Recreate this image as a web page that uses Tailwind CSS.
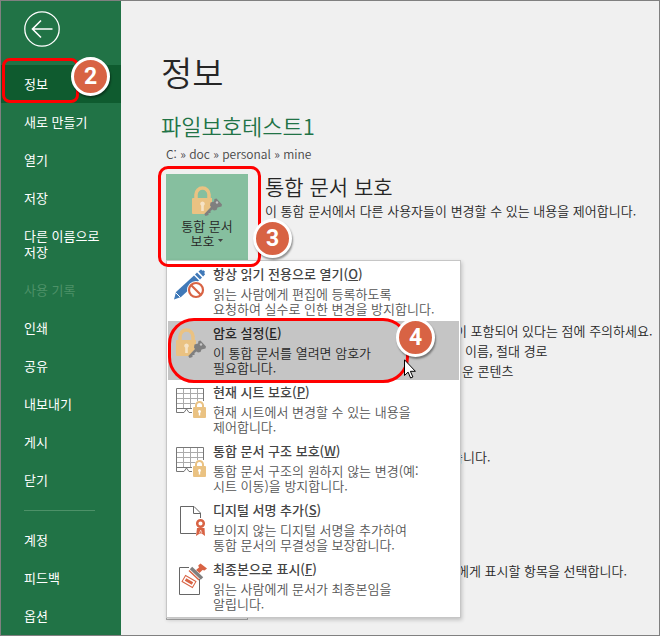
<!DOCTYPE html>
<html lang="ko">
<head>
<meta charset="utf-8">
<title>정보</title>
<script src="https://cdn.jsdelivr.net/npm/@tailwindcss/browser@4"></script>
</head>
<body class="font-['Noto_Sans_CJK_KR',sans-serif] text-[13px] text-[#262626]">
<svg class="hidden" aria-hidden="true">
  <symbol id="lock-key" viewBox="0 0 34 33">
    <path d="M6 14V9.500a6.500 6.500 0 0 1 13 0V14" fill="none" stroke="#eac282" stroke-width="3.500"/>
    <path d="M3 13h19v8l-7 8H3a1 1 0 0 1-1-1V14a1 1 0 0 1 1-1z" fill="#eac282"/>
    <path d="M12.500 16.500a2.300 2.300 0 0 1 1.300 4.200V26h-2.600v-5.300a2.300 2.300 0 0 1 1.300-4.200z" fill="#fff" fill-opacity=".55"/>
    <path d="M26.500 13.500 32 19.500l-.5 2-4 1-1 2.500-2.500.5-1.500-1-2 1.500v2h-2v2l-3 1-1.200-2L21 22l-1-1.500.5-3 3.500-1 .5-2.500z" fill="#7f7f7f"/>
    <circle cx="27" cy="17.500" r="1.200" fill="#c6c6c6"/>
  </symbol>
  <symbol id="pen-deny" viewBox="0 0 34 33">
    <path d="M0 31.500 2 24 20 7.500l5 5L7 29z" fill="#4079b8"/>
    <path d="m21 6.500 2-2 5 5-2 2zM24.500 3.500 27 1.500l1.500 1.300 1-.6 1.500 1.500-.8 1.300.9 1.300-2 2.200z" fill="#4079b8"/>
    <path d="m2 25 4 4" stroke="#fff" stroke-width="1"/>
    <circle cx="22" cy="22" r="9" fill="#fff"/>
    <circle cx="22" cy="22" r="7" fill="#fff" stroke="#d86344" stroke-width="2.200"/>
    <path d="m17 17 10 10" stroke="#d86344" stroke-width="2.200"/>
  </symbol>
  <symbol id="sheet-lock" viewBox="0 0 34 33">
    <path d="M9.500 3v19M16.500 3v19M23.500 3v19M3 7.500h26M3 17.500h26M3 12.500h26" stroke="#ababab" fill="none"/>
    <path d="M29.500 15V2.500h-27v24H7m-4.500-4H20m-13 4h3l2.500-3.500L15 26.500h3" stroke="#777" fill="none"/>
    <path d="M18 20h3a5 5 0 0 1 10-1l3 1v13H18z" fill="#fff"/>
    <path d="M22 22v-2.500a3.500 3.500 0 0 1 7 0V22" fill="none" stroke="#eac282" stroke-width="2"/>
    <rect x="19" y="21" width="13" height="11" rx="1" fill="#eac282"/>
    <path d="M25.500 24a1.500 1.500 0 0 1 .7 2.800V29.500h-1.400v-2.700a1.500 1.500 0 0 1 .7-2.800z" fill="#fff"/>
  </symbol>
  <symbol id="doc-ribbon" viewBox="0 0 34 33">
    <path d="M22 29.500H6.500v-27H20l6.500 6.500v5M19.500 2.500v7h7" stroke="#666" fill="none"/>
    <circle cx="26.500" cy="19.500" r="3.300" fill="#fff" stroke="#d86344" stroke-width="2.500"/>
    <path d="M23 24h7.500l.5 8-3.300-2.500h-1.900L22 32z" fill="#d86344"/>
    <path d="m26.700 26-1.200 3M26.700 26l1.200 3" stroke="#fff" stroke-width=".6"/>
  </symbol>
  <symbol id="doc-stamp" viewBox="0 0 34 33">
    <path d="M15 4.500H5.500v27h20V16" stroke="#666" fill="none"/>
    <path d="m17 5 11 10.500" stroke="#7f7f7f" stroke-width="3.500"/>
    <path d="m15 7.500 10 9.500" stroke="#d86344" stroke-width="1.500"/>
    <path d="m22 7 3-2.500-.8-2L26.500.500l6.500 5-2.500 2-2-.5-3 3z" fill="#d86344"/>
    <g transform="rotate(30 15 18.500)"><rect x="9" y="15" width="12" height="7" fill="#fff" stroke="#d86344"/><rect x="11" y="17" width="8" height="3" fill="#d86344"/></g>
  </symbol>
</svg>
<div class="flex min-h-screen overflow-hidden border border-[#808080] bg-[#f0f0f0]">
  <nav class="w-[120px] shrink-0 bg-[#217346] leading-4 text-white">
    <button aria-label="뒤로" class="mt-[10px] ml-[23px] block">
      <svg class="size-9" viewBox="0 0 36 36" fill="none" stroke="#fff"><circle cx="18" cy="18" r="17.200" stroke-width="1.300"/><path d="M28.500 18H8.500M17 9.500 8.500 18l8.500 8.500" stroke-width="1.600"/></svg>
    </button>
    <div class="relative mt-[18px]">
      <a href="#" class="block bg-[#0f5b2f] py-[11px] pl-[23px]">정보</a>
      <div class="pointer-events-none absolute -top-[7px] left-[1px] h-[45px] w-[77px] rounded-lg border-3 border-[#f00]"></div>
      <div class="absolute -top-2 left-[70px] z-30 flex size-[39px] items-center justify-center rounded-full border-3 border-white bg-[#d86344] font-[Roboto,sans-serif] text-[23px] font-bold shadow-[1px_2px_2px_rgba(0,0,0,0.4)]">2</div>
    </div>
    <a href="#" class="block py-[11px] pl-[23px]">새로 만들기</a>
    <a href="#" class="block py-[11px] pl-[23px]">열기</a>
    <a href="#" class="block py-[11px] pl-[23px]">저장</a>
    <a href="#" class="block py-[11px] pl-[23px]">다른 이름으로<br>저장</a>
    <a aria-disabled="true" class="block py-[11px] pl-[23px] text-[#4d9168]">사용 기록</a>
    <a href="#" class="block py-[11px] pl-[23px]">인쇄</a>
    <a href="#" class="block py-[11px] pl-[23px]">공유</a>
    <a href="#" class="block py-[11px] pl-[23px]">내보내기</a>
    <a href="#" class="block py-[11px] pl-[23px]">게시</a>
    <a href="#" class="block py-[11px] pl-[23px]">닫기</a>
    <hr class="mt-[11px] mr-[26px] mb-[10px] ml-[23px] border-[#4d9168]">
    <a href="#" class="block py-[11px] pl-[23px]">계정</a>
    <a href="#" class="block py-[11px] pl-[23px]">피드백</a>
    <a href="#" class="block pt-[11px] pb-2 pl-[23px]">옵션</a>
  </nav>
  <main class="min-w-0 flex-1 pt-[51px] pl-10 leading-5 font-[350]">
    <h1 class="text-[34px] leading-10">정보</h1>
    <h2 class="mt-[19px] text-[22px] leading-7 text-[#217346]">파일보호테스트1</h2>
    <p class="mt-[5px] ml-[5px] text-xs leading-5 text-[#444]">C: » doc » personal » mine</p>
    <section class="mt-[10px] ml-[5px] flex h-[120px] gap-[17px]">
      <div class="relative h-[86px] w-[82px] shrink-0">
        <button aria-haspopup="menu" aria-expanded="true" class="flex h-full w-full flex-col items-center bg-[#86bf9f] pt-[11px] leading-[15px]">
          <svg class="h-[33px] w-[34px] shrink-0"><use href="#lock-key"/></svg>
          <span>통합 문서</span>
          <span class="flex items-center gap-1">보호 <svg class="h-[3px] w-[5px]" viewBox="0 0 5 3"><path d="M0 0h5L2.500 3z" fill="#444"/></svg></span>
        </button>
        <div class="pointer-events-none absolute -top-2 -left-2 z-20 h-[101px] w-[103px] rounded-[10px] border-3 border-[#f00]"></div>
        <div class="absolute top-[45px] left-[87px] z-30 flex size-[39px] items-center justify-center rounded-full border-3 border-white bg-[#d86344] font-[Roboto,sans-serif] text-[23px] font-bold text-white shadow-[1px_2px_2px_rgba(0,0,0,0.4)]">3</div>
        <div role="menu" class="absolute top-full left-0 z-10 w-[295px] border border-[#c6c6c6] bg-white p-[1px] text-[#555] shadow-[1px_2px_4px_rgba(0,0,0,0.2)]">
          <button role="menuitem" class="flex w-full gap-[5px] pt-1 pr-2 pb-[5px] pl-[6px] text-left">
            <svg class="mt-[2px] h-[33px] w-[34px] shrink-0"><use href="#pen-deny"/></svg>
            <span><span class="block leading-4 font-medium text-[#444]">항상 읽기 전용으로 열기(<u>O</u>)</span><span class="mt-1 block leading-[15px]">읽는 사람에게 편집에 등록하도록<br>요청하여 실수로 인한 변경을 방지합니다.</span></span>
          </button>
          <div class="relative">
            <button role="menuitem" class="flex w-full gap-[5px] bg-[#c5c5c5] pt-1 pr-2 pb-[5px] pl-[6px] text-left text-[#262626]">
              <svg class="mt-[2px] h-[33px] w-[34px] shrink-0"><use href="#lock-key"/></svg>
              <span><span class="block leading-4 font-medium">암호 설정(<u>E</u>)</span><span class="mt-1 block leading-[15px]">이 통합 문서를 열려면 암호가<br>필요합니다.</span></span>
            </button>
            <div class="pointer-events-none absolute -top-[3px] left-0 h-[65px] w-[241px] rounded-[26px] border-3 border-[#f00]"></div>
            <div class="absolute -top-[3px] left-[228px] flex size-[39px] items-center justify-center rounded-full border-3 border-white bg-[#d86344] font-[Roboto,sans-serif] text-[23px] font-bold text-white shadow-[1px_2px_2px_rgba(0,0,0,0.4)]">4</div>
            <svg class="absolute top-[38px] left-[236px] h-5 w-3" viewBox="0 0 12 20"><path d="M.5.800v15.700l3.600-3.400 2.500 5.900 2.300-1-2.500-5.700h5z" fill="#fff" stroke="#000"/></svg>
          </div>
          <button role="menuitem" class="flex w-full gap-[5px] pt-1 pr-2 pb-[5px] pl-[6px] text-left">
            <svg class="mt-[2px] h-[33px] w-[34px] shrink-0"><use href="#sheet-lock"/></svg>
            <span><span class="block leading-4 font-medium text-[#444]">현재 시트 보호(<u>P</u>)</span><span class="mt-1 block leading-[15px]">현재 시트에서 변경할 수 있는 내용을<br>제어합니다.</span></span>
          </button>
          <button role="menuitem" class="flex w-full gap-[5px] pt-1 pr-2 pb-[5px] pl-[6px] text-left">
            <svg class="mt-[2px] h-[33px] w-[34px] shrink-0"><use href="#sheet-lock"/></svg>
            <span><span class="block leading-4 font-medium text-[#444]">통합 문서 구조 보호(<u>W</u>)</span><span class="mt-1 block leading-[15px]">통합 문서 구조의 원하지 않는 변경(예:<br>시트 이동)을 방지합니다.</span></span>
          </button>
          <button role="menuitem" class="flex w-full gap-[5px] pt-1 pr-2 pb-[5px] pl-[6px] text-left">
            <svg class="mt-[2px] h-[33px] w-[34px] shrink-0"><use href="#doc-ribbon"/></svg>
            <span><span class="block leading-4 font-medium text-[#444]">디지털 서명 추가(<u>S</u>)</span><span class="mt-1 block leading-[15px]">보이지 않는 디지털 서명을 추가하여<br>통합 문서의 무결성을 보장합니다.</span></span>
          </button>
          <button role="menuitem" class="flex w-full gap-[5px] pt-1 pr-2 pb-[5px] pl-[6px] text-left">
            <svg class="mt-[2px] h-[33px] w-[34px] shrink-0"><use href="#doc-stamp"/></svg>
            <span><span class="block leading-4 font-medium text-[#444]">최종본으로 표시(<u>F</u>)</span><span class="mt-1 block leading-[15px]">읽는 사람에게 문서가 최종본임을<br>알립니다.</span></span>
          </button>
        </div>
      </div>
      <div class="whitespace-nowrap">
        <h3 class="text-[21px] leading-6">통합 문서 보호</h3>
        <p class="mt-[3px]">이 통합 문서에서 다른 사용자들이 변경할 수 있는 내용을 제어합니다.</p>
      </div>
    </section>
    <section class="h-[126px] pt-[27px] pl-[294px] whitespace-nowrap">
      <p>이 포함되어 있다는 점에 주의하세요.</p>
      <p class="pl-[10px]">이름, 절대 경로</p>
      <p class="pl-[7px]">운 콘텐츠</p>
    </section>
    <section class="h-[114px] pt-[27px] pl-[290px] whitespace-nowrap">
      <p>습니다.</p>
    </section>
    <section class="ml-[5px] flex h-[86px] whitespace-nowrap">
      <div class="w-[82px] shrink-0 border border-[#ababab]"></div>
      <p class="pt-[27px] pl-[209px]">에게 표시할 항목을 선택합니다.</p>
    </section>
  </main>
</div>
</body>
</html>
